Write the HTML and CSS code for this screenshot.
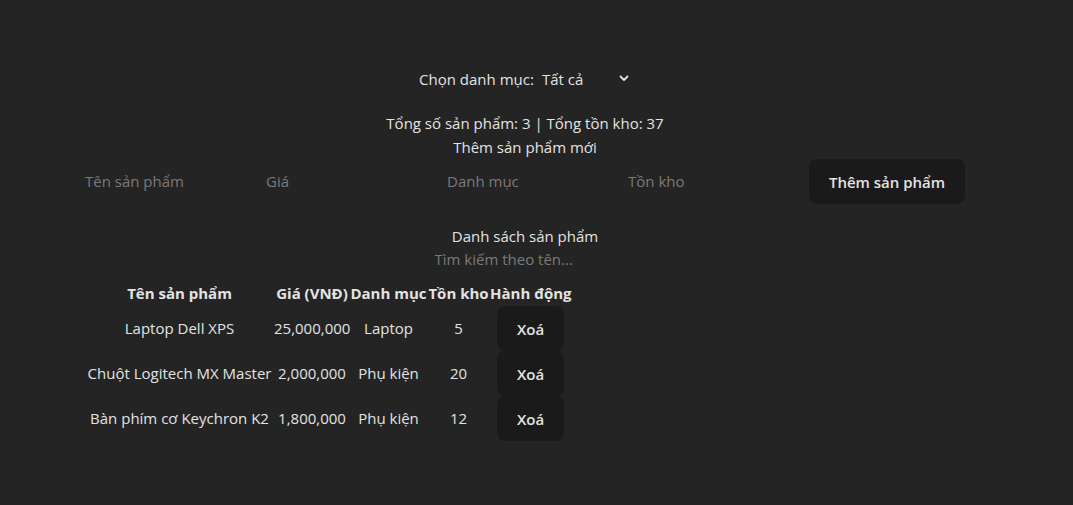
FILE: index.html
```html
<!DOCTYPE html>
<html lang="vi">
<head>
<meta charset="utf-8">
<title>Quản lý sản phẩm</title>
<link rel="stylesheet" href="styles.css">
</head>
<body>
<div class="app">
  <div class="filter">
    <label class="filter-label" for="cat">Chọn danh mục:</label>
    <span class="select-wrap">
      <select id="cat" class="select">
        <option>Tất cả</option>
        <option>Laptop</option>
        <option>Phụ kiện</option>
      </select>
      <svg class="chev" width="10" height="7" viewBox="0 0 10 7"><path d="M1.5 1.5 L5 5 L8.5 1.5" fill="none" stroke="#e3e3e3" stroke-width="1.8" stroke-linecap="round" stroke-linejoin="round"/></svg>
    </span>
  </div>
  <p class="stats">Tổng số sản phẩm: 3 | Tổng tồn kho: 37</p>
  <h3 class="subtitle">Thêm sản phẩm mới</h3>
  <div class="form-row">
    <input class="field" placeholder="Tên sản phẩm">
    <input class="field" placeholder="Giá">
    <input class="field" placeholder="Danh mục">
    <input class="field" placeholder="Tồn kho">
    <button class="btn btn-add">Thêm sản phẩm</button>
  </div>
  <h3 class="subtitle list-title">Danh sách sản phẩm</h3>
  <div class="search-row">
    <input class="field" placeholder="Tìm kiếm theo tên...">
  </div>
  <table class="table">
    <colgroup>
      <col class="c1"><col class="c2"><col class="c3"><col class="c4"><col class="c5">
    </colgroup>
    <thead>
      <tr><th>Tên sản phẩm</th><th>Giá (VNĐ)</th><th>Danh mục</th><th>Tồn kho</th><th>Hành động</th></tr>
    </thead>
    <tbody>
      <tr><td>Laptop Dell XPS</td><td>25,000,000</td><td>Laptop</td><td>5</td><td><button class="btn">Xoá</button></td></tr>
      <tr><td>Chuột Logitech MX Master</td><td>2,000,000</td><td>Phụ kiện</td><td>20</td><td><button class="btn">Xoá</button></td></tr>
      <tr><td>Bàn phím cơ Keychron K2</td><td>1,800,000</td><td>Phụ kiện</td><td>12</td><td><button class="btn">Xoá</button></td></tr>
    </tbody>
  </table>
</div>
</body>
</html>
```

FILE: styles.css
```css
html, body {
  margin: 0;
  padding: 0;
  background: #242424;
}
body {
  color: #e3e3e3;
  font-family: "Open Sans", "Noto Sans", sans-serif;
  font-size: 15px;
  line-height: 23px;
  width: 1073px;
  height: 505px;
}
.app {
  width: 880px;
  margin-left: 85px;
  padding-top: 67px;
  text-align: center;
}
.filter {
  display: flex;
  justify-content: center;
  align-items: center;
  height: 24px;
}
.filter-label {
  margin-right: 4px;
}
.select-wrap {
  position: relative;
  display: inline-block;
}
.select {
  appearance: none;
  -webkit-appearance: none;
  background: transparent;
  border: none;
  color: #e3e3e3;
  font: inherit;
  width: 93px;
  padding: 0 0 0 4px;
  height: 24px;
  outline: none;
}
.select option {
  background: #242424;
}
.chev {
  position: absolute;
  right: 2px;
  top: 8px;
  pointer-events: none;
}
.stats {
  margin: 21px 0 0;
}
.subtitle {
  margin: 1px 0 0;
  font-weight: 400;
  font-size: 15px;
}
.form-row {
  display: flex;
  align-items: center;
  height: 45px;
}
.field {
  width: 181px;
  box-sizing: border-box;
  background: transparent;
  border: none;
  outline: none;
  padding: 0;
  margin: 0;
  color: #e3e3e3;
  font: inherit;
}
.field::placeholder {
  color: #7a7a7a;
}
.btn {
  background: #1a1a1a;
  color: #e3e3e3;
  border: 1px solid transparent;
  border-radius: 8px;
  font-family: inherit;
  font-size: 15px;
  font-weight: 600;
  padding: 0 19px;
  height: 45px;
  cursor: pointer;
}
.btn-add {
  width: 156px;
  padding: 0;
}
.list-title {
  margin-top: 21px;
}
.search-row {
  display: flex;
  justify-content: center;
  height: 23px;
}
.table {
  border-collapse: collapse;
  border-spacing: 0;
  table-layout: fixed;
  width: 486px;
  margin-top: 10px;
}
.c1 { width: 189px; }
.c2 { width: 76px; }
.c3 { width: 77px; }
.c4 { width: 63px; }
.c5 { width: 81px; }
.table th, .table td {
  padding: 0;
  text-align: center;
  white-space: nowrap;
}
.table th {
  font-weight: 700;
  height: 25px;
}
.table td {
  height: 45px;
}
.table td .btn {
  width: 67px;
  padding: 0;
}
```
